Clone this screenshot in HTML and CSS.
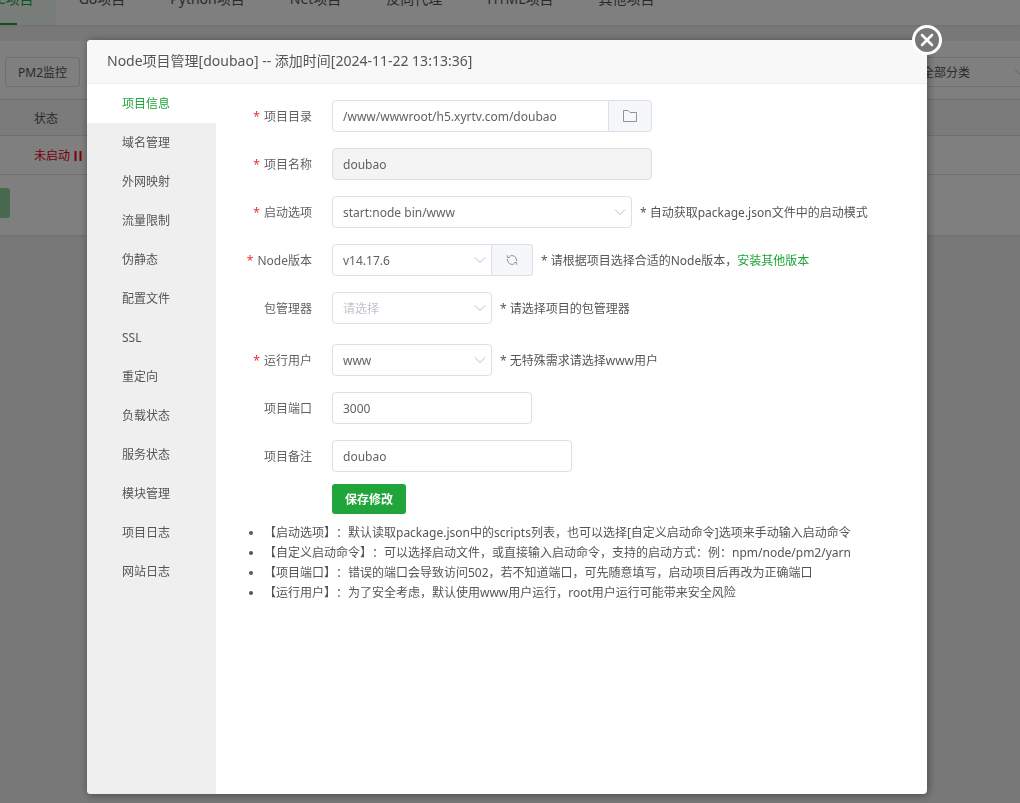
FILE: index.html
```html
<!DOCTYPE html>
<html lang="zh-CN">
<head>
<meta charset="utf-8">
<meta name="viewport" content="width=device-width, initial-scale=1">
<title>Node项目管理</title>
<link rel="stylesheet" href="styles.css">
</head>
<body>
<div class="page">
  <nav class="tabs">
    <a class="tab tab-active" href="#">Node项目</a>
    <a class="tab" href="#">Go项目</a>
    <a class="tab" href="#">Python项目</a>
    <a class="tab" href="#">Net项目</a>
    <a class="tab" href="#">反向代理</a>
    <a class="tab" href="#">HTML项目</a>
    <a class="tab" href="#">其他项目</a>
  </nav>
  <section class="panel">
    <div class="toolbar">
      <button class="tool-button" type="button">PM2监控</button>
      <div class="select-wrap category">
        <select class="field" aria-label="分类"><option>全部分类</option></select>
        <svg class="chevron" viewBox="0 0 12 8" aria-hidden="true"><path d="M1 1.5 6 6.5 11 1.5"/></svg>
      </div>
    </div>
    <table class="projects">
      <thead><tr><th>状态</th></tr></thead>
      <tbody><tr><td><span class="stopped">未启动<svg class="pause" viewBox="0 0 8 10" aria-hidden="true"><path d="M1.5 0v10M6.5 0v10"/></svg></span></td></tr></tbody>
    </table>
    <div class="batch"><button class="batch-button" type="button" aria-label="批量操作"></button></div>
  </section>
</div>

<div class="overlay">
  <div class="dialog" role="dialog" aria-labelledby="dialog-title">
    <button class="close" type="button" aria-label="关闭">
      <svg viewBox="0 0 14 14" aria-hidden="true"><path d="M2 2 12 12M12 2 2 12"/></svg>
    </button>
    <h1 class="dialog-title" id="dialog-title">Node项目管理[doubao] -- 添加时间[2024-11-22 13:13:36]</h1>
    <div class="dialog-body">
      <nav class="side">
        <a class="side-item side-active" href="#">项目信息</a>
        <a class="side-item" href="#">域名管理</a>
        <a class="side-item" href="#">外网映射</a>
        <a class="side-item" href="#">流量限制</a>
        <a class="side-item" href="#">伪静态</a>
        <a class="side-item" href="#">配置文件</a>
        <a class="side-item" href="#">SSL</a>
        <a class="side-item" href="#">重定向</a>
        <a class="side-item" href="#">负载状态</a>
        <a class="side-item" href="#">服务状态</a>
        <a class="side-item" href="#">模块管理</a>
        <a class="side-item" href="#">项目日志</a>
        <a class="side-item" href="#">网站日志</a>
      </nav>
      <form class="form">
        <div class="row">
          <label class="label required" for="dir">项目目录</label>
          <div class="group w-wide">
            <input class="field" id="dir" type="text" value="/www/wwwroot/h5.xyrtv.com/doubao">
            <button class="append append-folder" type="button" aria-label="选择目录">
              <svg class="icon-folder" viewBox="0 0 16 14" aria-hidden="true"><path d="M1.5 1.5h4.5l2 2h6.5v9h-13z"/></svg>
            </button>
          </div>
        </div>
        <div class="row">
          <label class="label required" for="name">项目名称</label>
          <input class="field w-wide" id="name" type="text" value="doubao" disabled>
        </div>
        <div class="row">
          <label class="label required" for="start">启动选项</label>
          <div class="select-wrap w-start">
            <select class="field" id="start"><option>start:node bin/www</option></select>
            <svg class="chevron" viewBox="0 0 12 8" aria-hidden="true"><path d="M1 1.5 6 6.5 11 1.5"/></svg>
          </div>
          <span class="hint">* 自动获取package.json文件中的启动模式</span>
        </div>
        <div class="row">
          <label class="label required" for="version">Node版本</label>
          <div class="group">
            <div class="select-wrap w-small">
              <select class="field" id="version"><option>v14.17.6</option></select>
              <svg class="chevron" viewBox="0 0 12 8" aria-hidden="true"><path d="M1 1.5 6 6.5 11 1.5"/></svg>
            </div>
            <button class="append append-refresh" type="button" aria-label="刷新版本">
              <svg class="icon-refresh" viewBox="0 0 12 12" aria-hidden="true"><path d="M3.500 2.300A4.600 4.600 0 0 1 10.600 6M1.400 6A4.600 4.600 0 0 0 8.500 9.700M1.300 1.200V3.500H3.800M10.700 10.800V8.500H8.200M1.400 6V5M10.600 6V7"/></svg>
            </button>
          </div>
          <span class="hint">* 请根据项目选择合适的Node版本，<a class="link" href="#">安装其他版本</a></span>
        </div>
        <div class="row row-last">
          <label class="label" for="manager">包管理器</label>
          <div class="select-wrap w-small">
            <select class="field placeholder" id="manager"><option>请选择</option></select>
            <svg class="chevron" viewBox="0 0 12 8" aria-hidden="true"><path d="M1 1.5 6 6.5 11 1.5"/></svg>
          </div>
          <span class="hint">* 请选择项目的包管理器</span>
        </div>
        <div class="row">
          <label class="label required" for="user">运行用户</label>
          <div class="select-wrap w-small">
            <select class="field" id="user"><option>www</option></select>
            <svg class="chevron" viewBox="0 0 12 8" aria-hidden="true"><path d="M1 1.5 6 6.5 11 1.5"/></svg>
          </div>
          <span class="hint">* 无特殊需求请选择www用户</span>
        </div>
        <div class="row">
          <label class="label" for="port">项目端口</label>
          <input class="field w-port" id="port" type="text" value="3000">
        </div>
        <div class="row row-note">
          <label class="label" for="note">项目备注</label>
          <input class="field w-note" id="note" type="text" value="doubao">
        </div>
        <button class="save" type="button">保存修改</button>
        <ul class="tips">
          <li>【启动选项】：默认读取package.json中的scripts列表，也可以选择[自定义启动命令]选项来手动输入启动命令</li>
          <li>【自定义启动命令】：可以选择启动文件，或直接输入启动命令，支持的启动方式：例：npm/node/pm2/yarn</li>
          <li>【项目端口】：错误的端口会导致访问502，若不知道端口，可先随意填写，启动项目后再改为正确端口</li>
          <li>【运行用户】：为了安全考虑，默认使用www用户运行，root用户运行可能带来安全风险</li>
        </ul>
      </form>
    </div>
  </div>
</div>
</body>
</html>
```
FILE: styles.css
```css
* { box-sizing: border-box; }

body {
  margin: 0;
  background: #f0f0f0;
  color: #555;
  font: 12px/20px "Noto Sans", "Noto Sans CJK SC", sans-serif;
  text-spacing-trim: space-all;
  overflow: hidden;
}

a { color: inherit; text-decoration: none; }
button, input, select { font: inherit; color: inherit; margin: 0; }
svg { display: block; fill: none; }

/* page behind the dialog */
.page { min-height: 100vh; overflow: hidden; }

.tabs {
  display: flex;
  align-items: flex-end;
  gap: 1px;
  height: 25px;
  margin-bottom: 16px;
  overflow: hidden;
  background: #fff;
  box-shadow: 0 1px 2px #ddd;
  font-size: 14px;
}
.tab {
  display: flex;
  flex: none;
  align-items: center;
  height: 52px;
  padding: 0 22px;
}
.tab-active {
  position: relative;
  margin-left: -52px;
  background: #f2faf4;
  color: #20a53a;
}
.tab-active::after {
  content: "";
  position: absolute;
  bottom: 0;
  left: calc(50% - 15px);
  width: 30px;
  height: 2px;
  background: #20a53a;
}

.panel { background: #fff; box-shadow: 0 1px 2px #ddd; padding-bottom: 17px; }
.toolbar {
  display: flex;
  justify-content: space-between;
  padding: 16px 0 12px 5px;
}
.tool-button {
  height: 30px;
  padding: 2px 12px 0;
  border: 1px solid #dcdfe6;
  border-radius: 3px;
  background: #fff;
}
.category { width: 125px; margin-right: -16px; }
.category .field { height: 30px; color: #555; }
.category .chevron { right: 10px; }
.projects { width: 100%; border-collapse: collapse; text-align: left; }
.projects th, .projects td {
  padding: 2px 34px 0;
  border-top: 1px solid #dcdfe6;
  border-bottom: 1px solid #dcdfe6;
  font-weight: normal;
}
.projects th { height: 36px; background: #f6f6f6; }
.projects td { height: 39px; }
.stopped { display: flex; align-items: center; gap: 4px; color: #f00010; }
.pause { width: 8px; height: 10px; stroke: currentColor; stroke-width: 2; }
.batch { margin-top: 13px; }
.batch-button {
  display: block;
  width: 10px;
  height: 30px;
  padding: 0;
  border: 0;
  border-radius: 0 3px 3px 0;
  background: #90d29d;
}

/* dialog */
.overlay {
  position: fixed;
  inset: 0;
  display: flex;
  padding: 40px 93px 9px 87px;
  background: rgba(0, 0, 0, .5);
}
.dialog {
  position: relative;
  display: flex;
  flex: 1;
  flex-direction: column;
  min-width: 0;
  border-radius: 4px;
  background: #fff;
  box-shadow: 1px 1px 8px rgba(0, 0, 0, .4);
}
.close {
  position: absolute;
  top: -15px;
  right: -15px;
  display: flex;
  align-items: center;
  justify-content: center;
  width: 30px;
  height: 30px;
  padding: 0;
  border: 3px solid #fff;
  border-radius: 50%;
  background: #777;
}
.close svg { width: 14px; height: 14px; stroke: #fff; stroke-width: 2.5; stroke-linecap: round; flex: none; }
.dialog-title {
  margin: 0;
  padding: 0 20px 2px;
  border-bottom: 1px solid #eee;
  border-radius: 4px 4px 0 0;
  background: #f8f8f8;
  font-size: 14px;
  font-weight: normal;
  line-height: 41px;
}
.dialog-body { display: flex; flex: 1; }

.side {
  flex: none;
  width: 129px;
  border-radius: 0 0 0 4px;
  background: #efefef;
}
.side-item { display: block; padding-left: 35px; line-height: 39px; }
.side-active { background: #fff; color: #20a53a; }

.form { flex: 1; padding: 16px 20px; }
.row { display: flex; align-items: center; margin-bottom: 16px; }
.row-last { margin-bottom: 20px; }
.row-note { margin-bottom: 12px; }
.label {
  flex: none;
  width: 96px;
  padding: 2px 20px 0 0;
  text-align: right;
  color: #606266;
}
.required::before { content: "*"; margin-right: 4px; color: #f03030; }
.field {
  width: 100%;
  height: 32px;
  padding: 0 10px;
  border: 1px solid #dcdfe6;
  border-radius: 4px;
  background: #fff;
  color: #606266;
  appearance: none;
}
select.field { padding-top: 2px; }
.field:disabled { background: #f4f4f4; color: #606266; }
select.placeholder { color: #c0c4cc; }
.w-wide { width: 320px; }
.w-start { width: 300px; }
.w-small { width: 160px; }
.w-port { width: 200px; }
.w-note { width: 240px; }

.select-wrap { position: relative; }
.chevron {
  position: absolute;
  top: calc(50% - 4px);
  right: 6px;
  width: 12px;
  height: 8px;
  stroke: #b8bcc4;
  pointer-events: none;
}
.group { display: flex; }
.group .field { border-radius: 4px 0 0 4px; }
.append {
  display: flex;
  flex: none;
  align-items: center;
  justify-content: center;
  height: 32px;
  padding: 0;
  border: 1px solid #dcdfe6;
  border-left: 0;
  border-radius: 0 4px 4px 0;
  background: #f5f7fa;
}
.append svg { stroke: #909399; }
.append-folder { width: 43px; }
.append-refresh { width: 41px; }
.icon-folder { width: 16px; height: 14px; }
.icon-refresh { width: 12px; height: 12px; }
.hint { margin-left: 8px; padding-top: 2px; }
.link { color: #20a53a; }

.save {
  display: block;
  height: 30px;
  margin-left: 96px;
  padding: 2px 13px 0;
  border: 0;
  border-radius: 3px;
  background: #20a53a;
  color: #fff;
  font-weight: bold;
}
.tips { margin: 9px 0 0; padding-left: 28px; }
```
